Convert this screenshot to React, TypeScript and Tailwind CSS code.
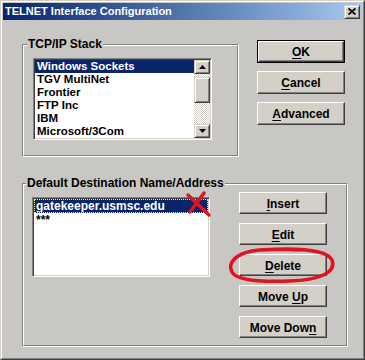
import React from "react";

const BG = "bg-[#c9c7c3]";

function Btn({ children, def, h }: { children: React.ReactNode; def?: boolean; h: string }) {
  const inner = (
    <div className="flex items-center justify-center w-full h-full bg-[#d4d0c8] border border-t-white border-l-white border-r-[#404040] border-b-[#404040] shadow-[inset_-1px_-1px_0_#808080] text-[12px] font-bold text-black leading-none">
      <span className="pt-[1px]">{children}</span>
    </div>
  );
  return <div className={`w-[88px] ${h} ${def ? "border border-black" : ""}`}>{inner}</div>;
}

function U({ children }: { children: React.ReactNode }) {
  return <span className="underline underline-offset-[2px] decoration-[1px]">{children}</span>;
}

const raised =
  "bg-[#d4d0c8] border border-t-[#d4d0c8] border-l-[#d4d0c8] border-r-[#404040] border-b-[#404040] shadow-[inset_1px_1px_0_#ffffff,inset_-1px_-1px_0_#808080]";

function Scrollbar() {
  return (
    <div className="w-[16px] h-full flex flex-col">
      <div className={`h-[14px] flex items-center justify-center ${raised}`}>
        <svg width="7" height="4" viewBox="0 0 7 4">
          <polygon points="3.5,0 7,4 0,4" fill="#000" />
        </svg>
      </div>
      <div className="flex-1 flex flex-col bg-[repeating-conic-gradient(#ffffff_0%_25%,#d4d0c8_0%_50%)] bg-[length:2px_2px]">
        <div className={`mt-[3px] h-[26px] ${raised}`} />
      </div>
      <div className={`h-[14px] flex items-center justify-center ${raised}`}>
        <svg width="7" height="4" viewBox="0 0 7 4">
          <polygon points="0,0 7,0 3.5,4" fill="#000" />
        </svg>
      </div>
    </div>
  );
}

function Row({ text, sel }: { text: string; sel?: boolean }) {
  return (
    <div
      className={`h-[13px] leading-[12px] text-[11.5px] font-bold pl-[2px] whitespace-nowrap ${
        sel ? "bg-[#0a246a] text-white" : "text-black"
      }`}
    >
      {text}
    </div>
  );
}

function GroupBox({
  label,
  labelLeft,
  className,
  children,
}: {
  label: string;
  labelLeft: string;
  className: string;
  children: React.ReactNode;
}) {
  return (
    <div
      className={`relative flex border border-t-[#808080] border-l-[#808080] border-r-white border-b-white ${className}`}
    >
      <div className="flex-1 flex items-start border border-t-white border-l-white border-r-[#808080] border-b-[#808080]">
        {children}
      </div>
      <div
        className={`absolute top-[-8px] ${labelLeft} px-[1px] ${BG} text-[12px] leading-[14px] font-bold text-black whitespace-nowrap`}
      >
        {label}
      </div>
    </div>
  );
}

export default function App() {
  return (
    <div
      className={`relative w-[365px] h-[360px] ${BG} border border-t-[#d4d0c8] border-l-[#d4d0c8] border-r-[#404040] border-b-[#404040] font-['Liberation_Sans',Arial,sans-serif] overflow-hidden`}
    >
      <div className="h-full flex flex-col border border-t-white border-l-white border-r-[#808080] border-b-[#808080] p-[1px]">
        {/* Title bar */}
        <div className="h-[17px] shrink-0 flex items-center justify-between pl-[2px] pr-[2px] bg-gradient-to-r from-[#0a246a] to-[#a6caf0]">
          <span className="text-white font-bold text-[11px] leading-none">TELNET Interface Configuration</span>
          <div className={`w-[16px] h-[14px] flex items-center justify-center ${raised}`}>
            <svg width="8" height="7" viewBox="0 0 8 7">
              <path d="M0.5 0.5 L7.5 6.5 M7.5 0.5 L0.5 6.5" stroke="#000" strokeWidth="1.8" />
            </svg>
          </div>
        </div>

        {/* Row 1 */}
        <div className="flex items-start pl-[19px]">
          <GroupBox label="TCP/IP Stack" labelLeft="left-[4px]" className="mt-[24px] w-[217px] h-[113px]">
            <div className="ml-[9px] mt-[12px] w-[179px] h-[82px] flex border border-t-[#808080] border-l-[#808080] border-b-white border-r-white shadow-[inset_1px_1px_0_#404040,inset_-1px_-1px_0_#d4d0c8] p-[1px]">
              <div className="flex-1 bg-white overflow-hidden">
                <Row text="Windows Sockets" sel />
                <Row text="TGV MultiNet" />
                <Row text="Frontier" />
                <Row text="FTP Inc" />
                <Row text="IBM" />
                <Row text="Microsoft/3Com" />
              </div>
              <Scrollbar />
            </div>
          </GroupBox>
          <div className="ml-[18px] mt-[20px] flex flex-col gap-[8px]">
            <Btn def h="h-[23px]">
              <U>O</U>K
            </Btn>
            <Btn h="h-[23px]">
              <U>C</U>ancel
            </Btn>
            <Btn h="h-[23px]">
              <U>A</U>dvanced
            </Btn>
          </div>
        </div>

        {/* Group 2 */}
        <div className="pl-[19px] mt-[26px]">
          <GroupBox
            label="Default Destination Name/Address"
            labelLeft="left-[3px]"
            className="w-[326px] h-[164px]"
          >
            <div className="ml-[8px] mt-[12px] w-[178px] h-[80px] flex border border-t-[#808080] border-l-[#808080] border-b-white border-r-white shadow-[inset_1px_1px_0_#404040,inset_-1px_-1px_0_#d4d0c8] p-[1px]">
              <div className="flex-1 bg-white overflow-hidden">
                <div className="h-[14px] bg-[#0a246a] text-white border border-dotted border-[#f0f0a0] pl-[1px] text-[12px] leading-[12px] font-bold whitespace-nowrap overflow-hidden">
                  gatekeeper.usmsc.edu
                </div>
                <div className="h-[14px] text-black text-[12px] leading-[14px] font-bold pl-[2px] whitespace-nowrap">
                  ***
                </div>
              </div>
            </div>
            <div className="ml-[29px] mt-[7px] flex flex-col gap-[9px]">
              <Btn h="h-[22px]">
                <U>I</U>nsert
              </Btn>
              <Btn h="h-[22px]">
                <U>E</U>dit
              </Btn>
              <Btn h="h-[22px]">
                <U>D</U>elete
              </Btn>
              <Btn h="h-[22px]">
                Move <U>U</U>p
              </Btn>
              <Btn h="h-[22px]">
                Move Dow<U>n</U>
              </Btn>
            </div>
          </GroupBox>
        </div>
      </div>

      {/* Red annotations */}
      <svg
        className="absolute top-[-1px] left-[-1px] pointer-events-none"
        width="365"
        height="360"
        viewBox="0 0 365 360"
      >
        <path
          d="M188 195 L209 215 M204 193 L190 212"
          stroke="#e0141e"
          strokeWidth="3.5"
          strokeLinecap="round"
          fill="none"
        />
        <path
          d="M262 250 C292 248 326 249 332 260 C337 273 318 280 290 281 C262 282 237 281 232 272 C227 262 237 254 252 251 C268 248 285 249 300 250"
          stroke="#e0141e"
          strokeWidth="3.5"
          strokeLinecap="round"
          fill="none"
        />
      </svg>
    </div>
  );
}
